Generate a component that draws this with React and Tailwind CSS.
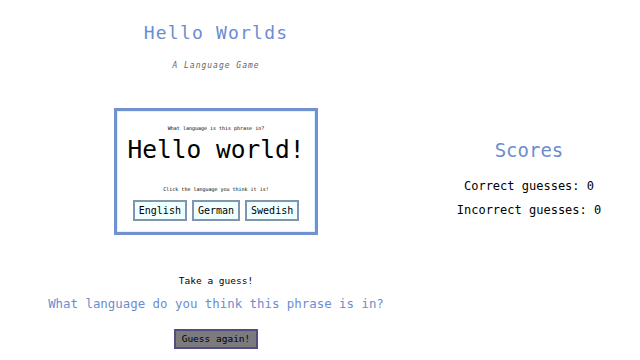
const mono = { fontFamily: '"DejaVu Sans Mono", "Liberation Mono", monospace' }

function LangButton({ children }) {
  return (
    <button className="h-[21px] px-[4px] bg-[#f0ffff] border-2 border-[#8096b0] text-[10px] leading-none text-black">
      {children}
    </button>
  )
}

export default function App() {
  return (
    <div style={mono} className="w-[640px] h-[360px] bg-white flex overflow-hidden">
      {/* Game column */}
      <div className="w-[432px] flex flex-col items-center">
        <h1 className="mt-[21px] h-[24px] leading-[24px] text-[18px] tracking-[1.2px] text-[#6b8dcf]">
          Hello Worlds
        </h1>
        <p className="mt-[16px] text-[8px] leading-[10px] italic tracking-[1px] text-[#666]">
          A Language Game
        </p>

        <div className="mt-[37px] w-[204px] h-[127px] border-[3px] border-[#7192d1] shadow-[inset_0_0_0_1px_#d9f3ff] flex flex-col items-center">
          <p className="mt-[14px] text-[5px] leading-[6px] text-black">What language is this phrase in?</p>
          <p className="mt-[4px] text-[24.5px] leading-[30px] text-black">Hello world!</p>
          <p className="mt-[21px] text-[5px] leading-[6px] text-black">Click the language you think it is!</p>
          <div className="mt-[8px] flex gap-[5px]">
            <LangButton>English</LangButton>
            <LangButton>German</LangButton>
            <LangButton>Swedish</LangButton>
          </div>
        </div>

        <p className="mt-[40px] text-[9.5px] leading-[12px] text-black">Take a guess!</p>
        <p className="mt-[9px] text-[12.4px] leading-[16px] text-[#6b8dcf]">
          What language do you think this phrase is in?
        </p>
        <button className="mt-[17px] w-[84px] h-[20px] bg-[#7b7b7f] border-2 border-[#564a82] text-[9.5px] leading-none text-black">
          Guess again!
        </button>
      </div>

      {/* Score column */}
      <div className="w-[194px] flex flex-col items-center">
        <h2 className="mt-[137px] text-[19px] leading-[26px] text-[#6b8dcf]">Scores</h2>
        <p className="mt-[15px] text-[12px] leading-[16px] text-black">Correct guesses: 0</p>
        <p className="mt-[8px] text-[12px] leading-[16px] text-black">Incorrect guesses: 0</p>
      </div>
    </div>
  )
}
